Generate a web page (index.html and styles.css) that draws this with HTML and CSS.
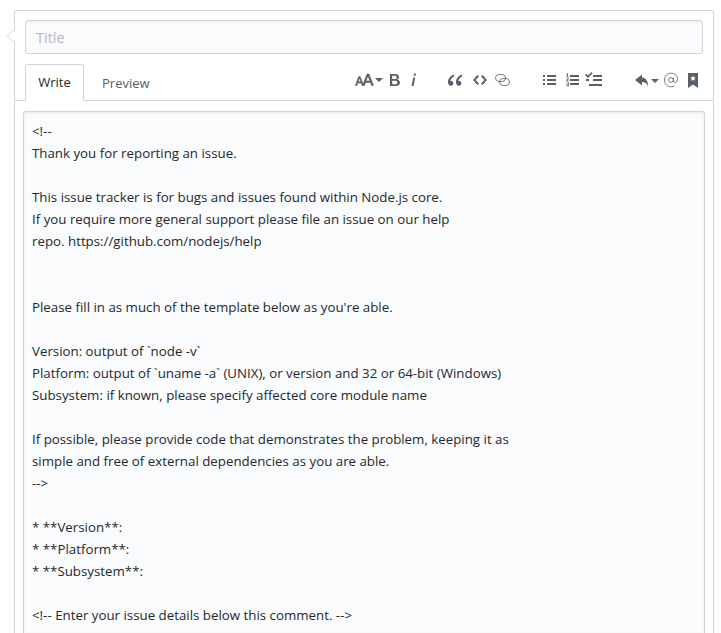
FILE: index.html
```html
<!DOCTYPE html>
<html lang="en">
<head>
<meta charset="utf-8">
<title>New issue</title>
<link rel="stylesheet" href="styles.css">
</head>
<body>
<div class="box">
  <span class="caret"></span>
  <div class="title-row"><input class="title" type="text" placeholder="Title"></div>
  <div class="tabbar">
    <div class="tab active">Write</div>
    <div class="tab">Preview</div>
    <div class="toolbar">
      <svg class="ic" width="28" height="16" viewBox="0 0 28 16"><g class="bold"><path d="M3.700 4.500h1.500l3.500 9H7.100l-.8-2.400H2.700l-.8 2.400H.3zM3.200 9.800h2.600L4.500 6.100z"/><path fill-rule="evenodd" d="M12 2h2l4.500 11.500h-2l-1-3H10.500l-1 3h-2zM11.100 8.900h3.800L13 3.900z"/></g><path d="M20 6h8l-4 4z"/></svg>
      <svg class="ic s7" width="10" height="16" viewBox="0 0 10 16"><path fill-rule="evenodd" d="M0 2h5c2.500 0 4 1.100 4 3.100 0 1.300-.7 2.200-1.800 2.600C8.800 8 10 9 10 10.600c0 2.200-1.700 3.400-4.300 3.400H0zM2.200 3.800v3.200h2.500c1.300 0 2.100-.5 2.100-1.600S6 3.800 4.700 3.800zM2.200 8.700v3.600h2.900c1.400 0 2.300-.6 2.300-1.800S6.500 8.700 5.100 8.700z"/></svg>
      <svg class="ic s11" width="5" height="16" viewBox="0 0 5 16"><path d="M3 1.500h2L4.600 3.700H2.600zM2.300 5.500h2L2.500 14H.5z"/></svg>
      <svg class="ic s32" width="14" height="16" viewBox="0 0 14 16"><path d="M6 2.500C2.500 3.700 0 6.500 0 10c0 2.200 1 3.700 2.800 3.700 1.500 0 2.600-1 2.600-2.500S4.400 8.700 3 8.700c-.3 0-.5 0-.7.1.3-1.700 1.900-3.500 3.700-4.400zM14 2.500c-3.500 1.200-6 4-6 7.500 0 2.200 1 3.700 2.800 3.700 1.500 0 2.600-1 2.600-2.500s-1-2.500-2.400-2.500c-.3 0-.5 0-.7.1.3-1.700 1.900-3.500 3.700-4.400z"/></svg>
      <svg class="ic s11" width="14" height="16" viewBox="0 0 14 16"><path d="M9.500 3 8 4.500 11.500 8 8 11.500 9.500 13 14 8zM4.500 3 0 8l4.500 5L6 11.500 2.500 8 6 4.500z"/></svg>
      <svg class="ic s8" width="15" height="16" viewBox="0 0 15 16"><rect class="thin" x=".5" y="2.500" width="10" height="7" rx="3.500"/><rect class="thin" x="4.500" y="6.500" width="10" height="7" rx="3.500"/></svg>
      <svg class="ic s33" width="13" height="16" viewBox="0 0 13 16"><path d="M0 3h2v2H0zM4 3h9v2H4zM0 7h2v2H0zM4 7h9v2H4zM0 11h2v2H0zM4 11h9v2H4z"/></svg>
      <svg class="ic s10" width="13" height="16" viewBox="0 0 13 16"><path d="M4 3h9v2H4zM4 7h9v2H4zM4 11h9v2H4zM1 1.500h1v3h.8v.7H.2v-.7H1V2.300H.3v-.5zM.2 6.500h2.600v.8L1.300 8.500h1.500v.7H.2v-.7l1.600-1.300H.2zM.2 10.500h2.600v3.700H.2v-.7h1.800v-.8H.8V12H2v-.8H.2z"/></svg>
      <svg class="ic s6" width="17" height="16" viewBox="0 0 17 16"><path d="M8 3h9v2H8zM8 7h9v2H8zM4 12h13v2H4zM1 7h3v2H1zM0 3 1.200 1.800l1.800 1.700L6.500 0l1.200 1.200L3 6z"/></svg>
      <svg class="ic s33" width="24" height="16" viewBox="0 0 24 16"><path d="M7 2.500 0 8l7 5.500V10c3 0 5 1.200 6 4.500 0-5.500-2-8.500-6-9zM16 7h8l-4 4z"/></svg>
      <svg class="ic s5" width="14" height="16" viewBox="0 0 14 16"><g class="thin"><circle cx="7" cy="8" r="2.400"/><path d="M9.400 5.700v3.500c0 1.800 3.600 1.800 4-1.200C14 4 11 1.200 7 1.200 3.200 1.200.5 4 .5 8c0 4 2.800 6.800 6.500 6.800 1.300 0 2.400-.2 3.500-.8"/></g></svg>
      <svg class="ic s10" width="10" height="16" viewBox="0 0 10 16"><path fill-rule="evenodd" d="M0 1h10v15l-5-3.500L0 16zM5 3.500l-.8 1.900-2 .2 1.500 1.300-.5 2L5 7.800l1.800 1.100-.5-2 1.500-1.300-2-.2z"/></svg>
    </div>
  </div>
  <div class="body">
    <div class="editor">&lt;!--
Thank you for reporting an issue.

This issue tracker is for bugs and issues found within Node.js core.
If you require more general support please file an issue on our help
repo. https://github.com/nodejs/help


Please fill in as much of the template below as you're able.

Version: output of `node -v`
Platform: output of `uname -a` (UNIX), or version and 32 or 64-bit (Windows)
Subsystem: if known, please specify affected core module name

If possible, please provide code that demonstrates the problem, keeping it as
simple and free of external dependencies as you are able.
--&gt;

* **Version**:
* **Platform**:
* **Subsystem**:

&lt;!-- Enter your issue details below this comment. --&gt;</div>
  </div>
</div>
</body>
</html>
```

FILE: styles.css
```css
html, body {
  margin: 0;
  height: 633px;
  overflow: hidden;
  background: #fff;
}
body {
  padding: 10px 7px 0 14px;
  box-sizing: border-box;
  font-family: "Open Sans", "Noto Sans", sans-serif;
  color: #24292e;
}
.box {
  position: relative;
  box-sizing: border-box;
  height: 623px;
  border: 1px solid #d1d5da;
  border-bottom: 0;
  border-radius: 3px 3px 0 0;
  background: #fff;
}
.caret {
  position: absolute;
  left: -8px;
  top: 19px;
  width: 11px;
  height: 11px;
  background: #fff;
  border-left: 1px solid #d1d5da;
  border-bottom: 1px solid #d1d5da;
  transform: rotate(45deg) scale(.72);
}
.title-row {
  padding: 9px 10px 10px;
}
.title {
  display: block;
  width: 100%;
  box-sizing: border-box;
  height: 34px;
  padding: 0 10px;
  border: 1px solid #d1d5da;
  border-radius: 3px;
  background: #fafbfc;
  font: 14px "Open Sans", sans-serif;
  box-shadow: inset 0 1px 2px rgba(27,31,35,.075);
}
.title::placeholder {
  color: #b3b7bc;
  opacity: 1;
  font-size: 14.5px;
}
.tabbar {
  display: flex;
  align-items: flex-end;
  height: 36px;
  padding-left: 10px;
  border-bottom: 1px solid #d1d5da;
}
.tab {
  box-sizing: border-box;
  height: 36px;
  padding: 0 12px;
  line-height: 35px;
  font-size: 13px;
  color: #586069;
  margin-bottom: -1px;
  border: 1px solid transparent;
  border-radius: 3px 3px 0 0;
  margin-right: 5px;
}
.tab.active {
  width: 59px;
  color: #24292e;
  background: #fff;
  border-color: #d1d5da;
  border-bottom-color: #fff;
  height: 37px;
  text-align: center;
  padding: 0;
}
.toolbar {
  display: flex;
  align-self: center;
  margin-left: auto;
  padding-right: 15px;
  align-items: center;
  margin-top: -5px;
}
.s5 { margin-left: 5px; }
.s6 { margin-left: 6px; }
.s7 { margin-left: 7px; }
.s8 { margin-left: 8px; }
.s10 { margin-left: 10px; }
.s11 { margin-left: 11px; }
.s32 { margin-left: 32px; }
.s33 { margin-left: 33px; }
.ic {
  display: block;
  fill: #586069;
}
.bold {
  stroke: #586069;
  stroke-width: .5;
}
.thin {
  fill: none;
  stroke: #586069;
  stroke-width: .8;
}
.body {
  padding: 10px 8px 0;
}
.editor {
  box-sizing: border-box;
  height: 522px;
  padding: 8px 8px 0;
  border: 1px solid #d1d5da;
  border-bottom: 0;
  border-radius: 3px 3px 0 0;
  background: #fafbfc;
  box-shadow: inset 0 1px 2px rgba(27,31,35,.075);
  font-size: 13.3px;
  line-height: 22px;
  white-space: pre-wrap;
}
```
